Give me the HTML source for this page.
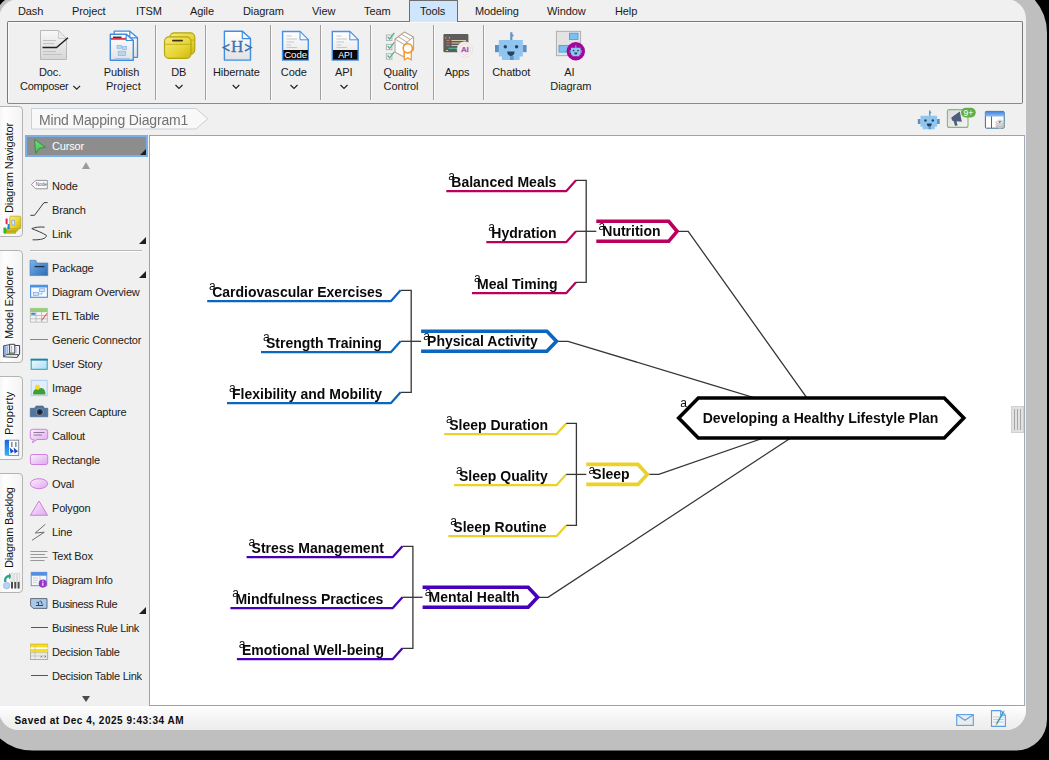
<!DOCTYPE html>
<html>
<head>
<meta charset="utf-8">
<title>Mind Mapping Diagram1</title>
<style>
*{box-sizing:border-box;margin:0;padding:0}
html,body{width:1049px;height:760px;overflow:hidden;background:#000}
body{position:relative;font-family:"Liberation Sans",sans-serif;font-size:11px;color:#111}
.abs{position:absolute}
#shadow{position:absolute;left:0;top:0}
#clip{position:absolute;left:-1px;top:-1px;width:1027px;height:731px;border-radius:20px;background:#f0f0f0;overflow:hidden}
#win{position:absolute;left:1px;top:1px;width:1026px;height:730px}
/* menu */
.mi{position:absolute;top:4px;height:14px;line-height:14px;font-size:11px;letter-spacing:-0.1px;color:#1a1a1a;white-space:nowrap}
#tooltab{position:absolute;left:409px;top:0;width:49px;height:22px;background:#cfe5fb;border:1px solid #6e6e6e;border-bottom:none;border-radius:1px 1px 0 0}
#ribbon{position:absolute;left:7px;top:21px;width:1016px;height:83px;border-radius:2px;border:1px solid #7a7a7a;border-bottom-color:#8a8a8a;background:#f0f0f0;box-shadow:inset 1px 1px 0 #fafafa}
.sep{position:absolute;top:25px;width:1px;height:75px;background:#a0a0a0;box-shadow:1px 0 0 #fbfbfb}
.rl{position:absolute;font-size:11px;line-height:14px;text-align:center;white-space:nowrap;color:#1a1a1a;letter-spacing:-0.1px;transform:translateX(-50%)}
.ric{position:absolute;top:28px;width:34px;height:34px}
/* side tabs */
.vtab{position:absolute;left:-2px;width:25px;border:1px solid #b4b4b4;border-radius:0 4px 4px 0;background:linear-gradient(90deg,#f4f4f4 0,#fefefe 25%,#f3f3f3 100%)}
.vtxt{position:absolute;left:9px;font-size:11px;white-space:nowrap;color:#111;transform-origin:0 0;transform:rotate(-90deg) translate(0,-50%);line-height:14px;letter-spacing:-0.1px}
/* palette */
.pi{position:absolute;left:52px;font-size:11px;line-height:14px;white-space:nowrap;color:#1a1a1a;letter-spacing:-0.18px}
.pic{position:absolute;left:30px;width:18px;height:18px}
.tri{position:absolute;left:139px;width:0;height:0;border-left:7px solid transparent;border-bottom:7px solid #1e1e1e}
#canvas{position:absolute;left:149px;top:135px;width:876px;height:571px;background:#fff;border:1px solid #9aa3b2;border-right-color:#a6adba}
#status{position:absolute;left:0;top:706px;width:1026px;height:24px;background:linear-gradient(#ffffff,#f2f2f2 60%,#ededed)}
</style>
</head>
<body>
<svg id="shadow" width="1049" height="760" viewBox="0 0 1049 760"><path d="M0 5.05A18 18 0 0 1 5.05 0H1034.8A50 50 0 0 1 1047 32.7V719.5A31 31 0 0 1 1016 750.6H32.7A50 50 0 0 1 0 738.5Z" fill="#bfbfbf"/></svg>
<div id="clip"><div id="win">

<!-- MENU BAR -->
<div id="tooltab"></div>
<div class="mi" style="left:18px">Dash</div>
<div class="mi" style="left:72px">Project</div>
<div class="mi" style="left:136px">ITSM</div>
<div class="mi" style="left:190px">Agile</div>
<div class="mi" style="left:243px">Diagram</div>
<div class="mi" style="left:312px">View</div>
<div class="mi" style="left:364px">Team</div>
<div class="mi" style="left:420px">Tools</div>
<div class="mi" style="left:475px">Modeling</div>
<div class="mi" style="left:547px">Window</div>
<div class="mi" style="left:615px">Help</div>

<!-- RIBBON -->
<div id="ribbon"></div>
<div class="abs" style="left:410px;top:21px;width:47px;height:1px;background:#d3e7fb"></div>
<div class="sep" style="left:155px"></div>
<div class="sep" style="left:205px"></div>
<div class="sep" style="left:270px"></div>
<div class="sep" style="left:320px"></div>
<div class="sep" style="left:370px"></div>
<div class="sep" style="left:433px"></div>
<div class="sep" style="left:483px"></div>
<!--RIBBON-ITEMS-->
<!-- Doc Composer -->
<svg class="abs" style="left:38px;top:28px" width="34" height="34" viewBox="38 28 34 34">
<defs><linearGradient id="gpg" x1="0" y1="0" x2="0" y2="1"><stop offset="0" stop-color="#f8f8f8"/><stop offset="1" stop-color="#d6d6d6"/></linearGradient></defs>
<path d="M40.5 30.5H58.5L66.5 38.5V59.5H40.5Z" fill="url(#gpg)" stroke="#b9b9b9"/>
<path d="M58.5 30.5V38.5H66.5Z" fill="#ececec" stroke="#c2c2c2" stroke-width=".8"/>
<path d="M43 40.5H56M43 43.5H54M43 51.5H56M43 54.5H62" stroke="#bdbdbd" stroke-width=".9"/>
<path d="M42.5 47.5H56.5L68 37.8" fill="none" stroke="#222" stroke-width="1.5"/>
</svg>
<div class="rl" style="left:50px;top:65px">Doc.</div>
<div class="rl" style="left:44.2px;top:79px;letter-spacing:-0.3px">Composer</div>
<svg class="abs" style="left:72px;top:84px" width="10" height="8" viewBox="0 0 10 8"><path d="M1.3 1.8L4.7 5.2L8.1 1.8" fill="none" stroke="#222" stroke-width="1.2"/></svg>
<!-- Publish Project -->
<svg class="abs" style="left:107px;top:28px" width="34" height="34" viewBox="107 28 34 34">
<defs><linearGradient id="gpb" x1="0" y1="0" x2="0" y2="1"><stop offset="0" stop-color="#ffffff"/><stop offset="1" stop-color="#e2e2e4"/></linearGradient></defs>
<path d="M114.2 31.2H129.8L137.5 37.8V57.3H114.2Z" fill="url(#gpb)" stroke="#3f8ee0" stroke-width="1.3" stroke-linejoin="round"/>
<path d="M129.8 31.2V37.8H137.5" fill="none" stroke="#3f8ee0" stroke-width="1.2"/>
<path d="M110.3 34.3H126.2L133.3 40.5V60.3H110.3Z" fill="url(#gpb)" stroke="#3f8ee0" stroke-width="1.4" stroke-linejoin="round"/>
<path d="M126.2 34.3V40.5H133.3Z" fill="#f4f8fd" stroke="#3f8ee0" stroke-width="1.2" stroke-linejoin="round"/>
<rect x="111" y="37.9" width="15" height="1.9" fill="#e0394a"/>
<rect x="113" y="36.6" width="8.5" height="1.3" fill="#222"/>
<rect x="117.1" y="45.3" width="4.2" height="3" fill="#bcd4f0" stroke="#8db4e4" stroke-width=".7"/>
<rect x="122.1" y="46.4" width="4.6" height="3" fill="#bcd4f0" stroke="#8db4e4" stroke-width=".7"/>
<rect x="118.2" y="51.2" width="7.5" height="4.4" fill="#bcd4f0" stroke="#8db4e4" stroke-width=".7"/>
<path d="M115 58.6H129.8" stroke="#a3c6ea" stroke-width="1.1"/>
</svg>
<div class="rl" style="left:121.5px;top:65px">Publish</div>
<div class="rl" style="left:123.4px;top:79px;letter-spacing:0.1px">Project</div>
<!-- DB -->
<svg class="abs" style="left:162px;top:28px" width="36" height="34" viewBox="162 28 36 34">
<defs><linearGradient id="gdb" x1="0" y1="0" x2="1" y2="1"><stop offset="0" stop-color="#f6ea7a"/><stop offset=".6" stop-color="#e6d535"/><stop offset="1" stop-color="#cdb90f"/></linearGradient></defs>
<rect x="169.8" y="32.8" width="25" height="21.5" rx="4.5" fill="url(#gdb)" stroke="#b3a414" stroke-width="1.15"/>
<path d="M170 40H195" stroke="#b9a815" stroke-width=".8"/>
<rect x="164.5" y="36.8" width="26.5" height="21.5" rx="4.5" fill="url(#gdb)" stroke="#b3a414" stroke-width="1.15"/>
<path d="M164.7 44.3H191" stroke="#b9a815" stroke-width=".8"/>
<rect x="172" y="39.7" width="11" height="1.7" rx=".8" fill="#3a3410"/>
</svg>
<div class="rl" style="left:178.7px;top:65px">DB</div>
<svg class="abs" style="left:174px;top:83px" width="10" height="8" viewBox="0 0 10 8"><path d="M1.5 2L5 5.4L8.5 2" fill="none" stroke="#222" stroke-width="1.2"/></svg>
<!-- Hibernate -->
<svg class="abs" style="left:221px;top:28px" width="34" height="34" viewBox="221 28 34 34">
<path d="M224.4 31.3H242.3L250.5 38.6V60.1H224.4Z" fill="url(#gpb)" stroke="#3f8ee0" stroke-width="1.4" stroke-linejoin="round"/>
<path d="M242.3 31.3V38.6H250.5Z" fill="#f4f8fd" stroke="#3f8ee0" stroke-width="1.2" stroke-linejoin="round"/>
<text x="237.2" y="52.4" text-anchor="middle" font-family="Liberation Serif,serif" font-size="17" fill="#3d72b5" stroke="#3d72b5" stroke-width=".35">H</text>
<path d="M229.6 44.3L223.3 47.6L229.6 51M245 44.3L251.2 47.6L245 51" fill="none" stroke="#3d72b5" stroke-width="1.5"/>
</svg>
<div class="rl" style="left:236.4px;top:65px">Hibernate</div>
<svg class="abs" style="left:231.3px;top:82.8px" width="10" height="8" viewBox="0 0 10 8"><path d="M1.7 2L5 5.3L8.3 2" fill="none" stroke="#222" stroke-width="1.2"/></svg>
<!-- Code -->
<svg class="abs" style="left:280px;top:28px" width="34" height="34" viewBox="280 28 34 34">
<path d="M282.6 31.5H300L308.3 39.8V60H282.6Z" fill="url(#gpb)" stroke="#4a90e2" stroke-width="1.4"/>
<path d="M300 31.5V39.8H308.3Z" fill="#f3f8fe" stroke="#4a90e2" stroke-width="1"/>
<path d="M286.5 36H291.5M286.5 39H297M286.5 42H294M286.5 45H291M286.5 47.5H297" stroke="#c4c4c4" stroke-width=".9"/>
<rect x="283.3" y="50" width="24.6" height="9.6" fill="#0a0a0a"/>
<text x="295.6" y="58" text-anchor="middle" font-family="Liberation Sans,sans-serif" font-size="9.6" fill="#fff">Code</text>
</svg>
<div class="rl" style="left:293.8px;top:65px">Code</div>
<svg class="abs" style="left:289.4px;top:83px" width="10" height="8" viewBox="0 0 10 8"><path d="M1.5 2L5 5.4L8.5 2" fill="none" stroke="#222" stroke-width="1.2"/></svg>
<!-- API -->
<svg class="abs" style="left:329px;top:28px" width="34" height="34" viewBox="329 28 34 34">
<path d="M332.3 31.5H349.8L358.2 39.8V60H332.3Z" fill="url(#gpb)" stroke="#4a90e2" stroke-width="1.4"/>
<path d="M349.8 31.5V39.8H358.2Z" fill="#f3f8fe" stroke="#4a90e2" stroke-width="1"/>
<path d="M336.5 36H341.5M336.5 39H347M336.5 42H344M336.5 45H341M336.5 47.5H347" stroke="#c4c4c4" stroke-width=".9"/>
<rect x="333" y="50" width="24.6" height="9.6" fill="#0a0a0a"/>
<text x="345.3" y="58" text-anchor="middle" font-family="Liberation Sans,sans-serif" font-size="8.8" fill="#fff">API</text>
</svg>
<div class="rl" style="left:343.8px;top:65px">API</div>
<svg class="abs" style="left:339.2px;top:83px" width="10" height="8" viewBox="0 0 10 8"><path d="M1.5 2L5 5.4L8.5 2" fill="none" stroke="#222" stroke-width="1.2"/></svg>
<!-- Quality Control -->
<svg class="abs" style="left:384px;top:28px" width="34" height="34" viewBox="384 28 34 34">
<g fill="#f4f4f4" stroke="#a9b0b0" stroke-width=".9"><rect x="386.3" y="35" width="5.6" height="5.4"/><rect x="386.3" y="44.3" width="5.6" height="5.4"/><rect x="386.3" y="53.8" width="5.6" height="5.4"/></g>
<g fill="none" stroke="#4fae8e" stroke-width="1.25"><path d="M387.6 36.8L389.6 39L394.3 33"/><path d="M387.6 46L389.6 48.3L394.3 42.3"/><path d="M387.6 55.5L389.6 57.8L394.3 51.8"/></g>
<path d="M395 39L404.5 32L413.5 37V50L404 57L395 52Z" fill="#fff" stroke="#b9a693" stroke-width="1.1" stroke-linejoin="round"/>
<path d="M395 39L404 44.5L413.5 37M404 44.5V57M398.2 36.6L407.3 42.4V47M401.4 34.3L410.4 39.5" fill="none" stroke="#b9a693" stroke-width="1"/>
<path d="M404.3 52V60L407.8 57.7L411.3 60V52Z" fill="#fff" stroke="#f5962a" stroke-width="1.2" stroke-linejoin="round"/>
<circle cx="407.8" cy="48.3" r="4.6" fill="#fff" stroke="#f5962a" stroke-width="1.6"/>
</svg>
<div class="rl" style="left:400.3px;top:65px">Quality</div>
<div class="rl" style="left:401px;top:79px">Control</div>
<!-- Apps -->
<svg class="abs" style="left:440px;top:28px" width="36" height="34" viewBox="440 28 36 34">
<rect x="443.4" y="34" width="25" height="18.2" rx="1" fill="#5d5d5d"/>
<path d="M446.5 36.8L445.3 37.8L446.5 38.8M448.8 36.8L450 37.8L448.8 38.8" fill="none" stroke="#d0d0d0" stroke-width=".6"/>
<path d="M446.3 40.5H449.5M446.3 43H449.5M446.3 45.5H449.5" stroke="#e06a55" stroke-width="1"/>
<path d="M451.5 40.5H466M451.5 43H464M451.5 45.5H460" stroke="#d8c8a8" stroke-width="1"/>
<path d="M448.5 48.3H458" stroke="#4fc3a1" stroke-width="1"/><path d="M446 50.5H448" stroke="#e8d27a" stroke-width=".9"/>
<circle cx="464.8" cy="49.4" r="7.6" fill="#fff" stroke="#d9d9d9" stroke-width=".8"/>
<circle cx="464.8" cy="49.4" r="5.9" fill="#fbeaec" stroke="#f0bcc2" stroke-width=".6"/>
<text x="464.8" y="52.2" text-anchor="middle" font-family="Liberation Sans,sans-serif" font-weight="bold" font-size="7.8" fill="#4560c4" stroke="#e2707c" stroke-width=".25">AI</text>
</svg>
<div class="rl" style="left:457.2px;top:65px">Apps</div>
<!-- Chatbot -->
<svg class="abs" style="left:493px;top:28px" width="36" height="34" viewBox="493 28 36 34">
<path d="M510.2 32.2H512.4V34.4H513.5V36.6H512.4V40H510.2Z" fill="#5f97cb"/>
<rect x="495" y="45" width="4" height="7.2" fill="#5f8fc0"/><rect x="522.6" y="45" width="4" height="7.2" fill="#5f8fc0"/>
<path d="M498.8 40H522.8V56.6H519.6V60H502V56.6H498.8Z" fill="#90c5ef"/>
<circle cx="505.3" cy="46.8" r="1.7" fill="#27425e"/><circle cx="516.6" cy="46.8" r="1.7" fill="#27425e"/>
<path d="M507.2 51.6H514.6C514.6 54.6 512.9 56 510.9 56C508.9 56 507.2 54.6 507.2 51.6Z" fill="#27425e"/>
<rect x="510" y="56" width="3.6" height="4" fill="#5f97cb"/>
</svg>
<div class="rl" style="left:511.2px;top:65px">Chatbot</div>
<!-- AI Diagram -->
<svg class="abs" style="left:553px;top:28px" width="36" height="36" viewBox="553 28 36 36">
<rect x="556.4" y="31.3" width="24.2" height="24.4" fill="#e3e3e3" stroke="#a8a8a8" stroke-width=".9"/>
<rect x="569.4" y="33.2" width="8.6" height="6.2" fill="#7cc0f2" stroke="#3f9ae0" stroke-width=".8"/>
<rect x="559" y="45.5" width="10" height="6.6" fill="#7cc0f2" stroke="#3f9ae0" stroke-width=".8"/>
<circle cx="575.8" cy="51.2" r="9.2" fill="#a3069c"/>
<rect x="575.2" y="45.3" width="1.2" height="2.6" fill="#6fa8de"/>
<rect x="569.6" y="50" width="1.6" height="3" fill="#5f8fc0"/><rect x="580.4" y="50" width="1.6" height="3" fill="#5f8fc0"/>
<path d="M571 47.8H580.6V54.8H579.3V56.3H572.3V54.8H571Z" fill="#90c5ef"/>
<circle cx="573.6" cy="50.6" r=".8" fill="#27425e"/><circle cx="578" cy="50.6" r=".8" fill="#27425e"/>
<path d="M574.3 52.6H577.3C577.3 54 576.6 54.6 575.8 54.6C575 54.6 574.3 54 574.3 52.6Z" fill="#27425e"/>
</svg>
<div class="rl" style="left:569.3px;top:65px">AI</div>
<div class="rl" style="left:570.8px;top:79px">Diagram</div>
<!--/RIBBON-ITEMS-->

<!--BREADCRUMB-->
<svg class="abs" style="left:28px;top:105px" width="190" height="28" viewBox="28 105 190 28"><path d="M31.5 108.5H196L207.8 118.8L196 129H31.5Z" fill="#f8f8f8" stroke="#c9d0d9" stroke-width="1"/></svg>
<div class="abs" style="left:38.8px;top:111px;font-size:14px;line-height:18px;letter-spacing:-0.16px;color:#727272;white-space:nowrap;will-change:transform">Mind Mapping Diagram1</div>
<!-- robot small -->
<svg class="abs" style="left:916px;top:108px" width="26" height="24" viewBox="916 108 26 24">
<path d="M929 110.4H930.4V111.8H931.2V113.2H930.4V116H929Z" fill="#5f97cb"/>
<rect x="917.8" y="119" width="2.8" height="5" fill="#5f8fc0"/><rect x="936.9" y="119" width="2.8" height="5" fill="#5f8fc0"/>
<path d="M920.5 115.8H937V126.8H934.8V129.2H922.7V126.8H920.5Z" fill="#90c5ef"/>
<circle cx="925.5" cy="120.5" r="1.2" fill="#27425e"/><circle cx="932.8" cy="120.5" r="1.2" fill="#27425e"/>
<path d="M926.8 123.6H931.8C931.8 125.8 930.6 126.7 929.3 126.7C928 126.7 926.8 125.8 926.8 123.6Z" fill="#27425e"/>
<rect x="928.6" y="126.7" width="2.4" height="2.5" fill="#5f97cb"/>
</svg>
<!-- megaphone -->
<svg class="abs" style="left:945px;top:106px" width="34" height="26" viewBox="945 106 34 26">
<defs><linearGradient id="gmg" x1="0" y1="0" x2="1" y2="1"><stop offset="0" stop-color="#dcdcdc"/><stop offset="1" stop-color="#f4f4f4"/></linearGradient></defs>
<rect x="947.4" y="109.6" width="20.6" height="17.8" rx="2" fill="url(#gmg)" stroke="#86b777" stroke-width="1.1"/>
<path d="M951.3 117.6L959.8 111.6L961.8 121.8L956.5 121.2L957.6 125.6L955 125.8L953.6 120.9L952 120.6Z" fill="#4d5d7c"/>
<rect x="961" y="107.8" width="14.8" height="9.6" rx="4.8" fill="#62b044"/>
<text x="968.4" y="115.6" text-anchor="middle" font-family="Liberation Sans,sans-serif" font-size="8.6" fill="#fff">9+</text>
</svg>
<!-- panel icon -->
<svg class="abs" style="left:983px;top:109px" width="24" height="24" viewBox="983 109 24 24">
<defs><linearGradient id="gpn" x1="0" y1="0" x2="0" y2="1"><stop offset="0" stop-color="#3f7fe0"/><stop offset="1" stop-color="#8fbdf5"/></linearGradient></defs>
<rect x="985.4" y="111.4" width="18.8" height="16.8" rx="1" fill="#fdfdfd" stroke="#34708f" stroke-width="1"/>
<rect x="985.4" y="111.2" width="18.8" height="5.2" rx="1" fill="url(#gpn)"/>
<path d="M991.5 116.4V128" stroke="#34708f" stroke-width="1"/>
<path d="M995.5 126.6L1000 124.2L1004.5 126.6L1000 129Z" fill="#c9c9c9" stroke="#a8a8a8" stroke-width=".5"/>
<path d="M995.5 124.4L1000 122L1004.5 124.4L1000 126.8Z" fill="#dcdcdc" stroke="#a8a8a8" stroke-width=".5"/>
<path d="M995.5 122.2L1000 119.8L1004.5 122.2L1000 124.6Z" fill="#e8e8e8" stroke="#a8a8a8" stroke-width=".5"/>
<path d="M998.6 121L1001.5 121.2L999.4 123.4Z" fill="#3f7fe0"/>
</svg>
<!--/BREADCRUMB-->

<!--SIDETABS-->
<div class="vtab" style="top:106px;height:131px"></div>
<div class="vtxt" style="top:213px">Diagram Navigator</div>
<svg class="abs" style="left:2px;top:214px" width="21" height="21" viewBox="2 214 21 21">
<defs><linearGradient id="gye" x1="0" y1="0" x2="1" y2="1"><stop offset="0" stop-color="#f8ee80"/><stop offset=".5" stop-color="#ecd93a"/><stop offset="1" stop-color="#c9b312"/></linearGradient></defs>
<path d="M6 229.5H17L15.5 233.3H4Z" fill="#cdb81a" stroke="#8f8010" stroke-width=".5"/>
<path d="M7.5 227.5H19L17.3 231H6Z" fill="#d8c420" stroke="#8f8010" stroke-width=".5"/>
<rect x="5.6" y="218.6" width="2" height="5.6" rx=".6" fill="#e0245a"/>
<rect x="7.6" y="224" width="2.2" height="5.2" rx=".6" fill="#1f7fe0"/>
<rect x="3.4" y="227.4" width="2.8" height="5.8" rx=".6" fill="#22c02a"/>
<rect x="9.8" y="216.2" width="11" height="12.6" rx="1" fill="url(#gye)" stroke="#b5a215" stroke-width=".7"/>
<rect x="11.9" y="220.2" width="2.6" height="4.8" fill="#e6eefa" stroke="#7f9fd8" stroke-width=".7"/>
</svg>
<div class="vtab" style="top:250px;height:113px"></div>
<div class="vtxt" style="top:339px">Model Explorer</div>
<svg class="abs" style="left:2px;top:342px" width="20" height="18" viewBox="2 342 20 18">
<defs><linearGradient id="gme" x1="0" y1="0" x2="1" y2="0"><stop offset="0" stop-color="#7fa8e6"/><stop offset="1" stop-color="#f2f5fa"/></linearGradient></defs>
<path d="M14 345.5H19.6V354L17 357.5" fill="#f2f2f2" stroke="#3f444a" stroke-width="1"/>
<path d="M9.5 344.3H14.8V353.2H9.5Z" fill="#eef2f8" stroke="#3f444a" stroke-width="1"/>
<path d="M3.6 345.8L9.6 344.6V353.5L3.6 356.8Z" fill="url(#gme)" stroke="#3f444a" stroke-width=".9"/>
<path d="M3.6 356.8L6 354.6H18.5L17 357.5Z" fill="#f4f4f4" stroke="#3f444a" stroke-width=".9"/>
<path d="M5.5 347V355M7.5 346.5V354M11.5 346V352.5M16 347V353" stroke="#8fb0e0" stroke-width=".9"/>
<rect x="10.5" y="352.6" width="3" height="1.2" fill="#8a9a2a"/>
</svg>
<div class="vtab" style="top:376px;height:84px"></div>
<div class="vtxt" style="top:434.5px;letter-spacing:.25px">Property</div>
<svg class="abs" style="left:2px;top:437px" width="20" height="22" viewBox="2 437 20 22">
<defs><linearGradient id="gpr" x1="0" y1="0" x2="0" y2="1"><stop offset="0" stop-color="#1f62d8"/><stop offset="1" stop-color="#35b4fa"/></linearGradient></defs>
<rect x="8.5" y="440.2" width="10.2" height="15.2" fill="#fcfcfc" stroke="#76809a" stroke-width=".9"/>
<rect x="4.7" y="439.8" width="4.3" height="16" rx="1.2" fill="url(#gpr)"/>
<rect x="11" y="442" width="1.6" height="5" fill="#8a90a0"/><rect x="15" y="442" width="1.6" height="5" fill="#8a90a0"/>
<path d="M9.6 447.6L14 451.2L10.6 453.4ZM13.6 447.6L18 451.2L14.6 453.4Z" fill="#1848c8"/>
</svg>
<div class="vtab" style="top:473px;height:120px"></div>
<div class="vtxt" style="top:567.5px;letter-spacing:-.2px">Diagram Backlog</div>
<svg class="abs" style="left:2px;top:571px" width="20" height="20" viewBox="2 571 20 20">
<path d="M4 582C3.5 577 6.5 574.8 9 575V573L12 576.3L9 579.6V577.6C7.3 577.4 6 578.6 6.3 582Z" fill="#2aa58a"/>
<circle cx="6.6" cy="585.6" r="3.2" fill="#b9d3f5" stroke="#8fb6ec" stroke-width=".8"/>
<path d="M11 573.2H13V582H11ZM14.3 573.2H16.3V582H14.3ZM17.6 573.2H19.6V582H17.6Z" fill="#f6f6f6" stroke="#c4c4c4" stroke-width=".6"/>
<path d="M11 582H13V588.5H11ZM14.3 582H16.3V588.5H14.3ZM17.6 582H19.6V588.5H17.6Z" fill="#4a4a4a"/>
</svg>
<!--/SIDETABS-->

<!--PALETTE-->
<div class="abs" style="left:25px;top:135px;width:123px;height:22px;background:#8d8d8d;border:2px solid #7ab0ea"></div>
<svg class="abs" style="left:32px;top:138px" width="16" height="16" viewBox="32 138 16 16"><defs><linearGradient id="gar" x1="0" y1="0" x2="0" y2="1"><stop offset="0" stop-color="#86d086"/><stop offset="1" stop-color="#2fd244"/></linearGradient></defs><path d="M34.6 139.4L45.4 147.2L39.2 148.4L35.6 153.4Z" fill="url(#gar)" stroke="#2f8a3a" stroke-width=".9" stroke-linejoin="round"/></svg>
<div class="pi" style="top:139px;color:#fff">Cursor</div>
<div class="tri" style="top:149px;left:139.5px;border-left-width:6px;border-bottom-width:6px;border-bottom-color:#1c1c1c"></div>
<div class="abs" style="left:82px;top:162px;width:0;height:0;border-left:4.2px solid transparent;border-right:4.2px solid transparent;border-bottom:7px solid #9b9b9b"></div>
<!-- Node -->
<svg class="abs" style="left:29px;top:176px" width="20" height="18" viewBox="29 176 20 18"><path d="M31.3 184.5L35.8 180.4H47.3V188.8H35.8Z" fill="#fafafa" stroke="#8a8a8a" stroke-width=".9"/><text x="41.3" y="186.3" text-anchor="middle" font-size="4.6" font-family="Liberation Sans,sans-serif" fill="#555">Node</text></svg>
<div class="pi" style="top:179px">Node</div>
<svg class="abs" style="left:29px;top:200px" width="20" height="18" viewBox="29 200 20 18"><path d="M30.3 215.3H34.5L44 202.6H47.6" fill="none" stroke="#3c3c3c" stroke-width="1"/></svg>
<div class="pi" style="top:203px">Branch</div>
<svg class="abs" style="left:29px;top:224px" width="20" height="20" viewBox="29 224 20 20"><path d="M44.6 227.2C40 226.6 35 227.2 31.8 228.6C37 230.8 43 233 46.3 235.3C47 238.6 40 240.2 32.6 239.8" fill="none" stroke="#3c3c3c" stroke-width="1"/></svg>
<div class="pi" style="top:227px">Link</div>
<div class="tri" style="top:237px"></div>
<div class="abs" style="left:30px;top:250px;width:112px;height:1px;background:#b8b8b8;box-shadow:0 1px 0 #fcfcfc"></div>
<!-- Package -->
<svg class="abs" style="left:28px;top:258px" width="22" height="20" viewBox="28 258 22 20"><defs><linearGradient id="gfo" x1="0" y1="0" x2="1" y2="1"><stop offset="0" stop-color="#7db4ea"/><stop offset="1" stop-color="#2c6ab3"/></linearGradient></defs><path d="M30 260.3H35.8L37 263H47.8V275.6H30Z" fill="url(#gfo)" stroke="#3a78c2" stroke-width=".6"/><path d="M34.6 266.6H44.4" stroke="#1c2f48" stroke-width="1.3"/></svg>
<div class="pi" style="top:261px">Package</div>
<div class="tri" style="top:271px"></div>
<!-- Diagram Overview -->
<svg class="abs" style="left:28px;top:282px" width="22" height="20" viewBox="28 282 22 20"><rect x="30.6" y="285.3" width="16.8" height="12" fill="#f6fafe" stroke="#4a90e2" stroke-width="1.1"/><rect x="30.6" y="285.3" width="16.8" height="2.2" fill="#4a90e2"/><rect x="33.5" y="292.5" width="5" height="2.8" fill="#d6e6f8" stroke="#6ea5e2" stroke-width=".7"/><rect x="39.5" y="288.8" width="5.2" height="2.8" fill="#d6e6f8" stroke="#6ea5e2" stroke-width=".7"/><path d="M38.5 294H42V291.6" fill="none" stroke="#6ea5e2" stroke-width=".7"/></svg>
<div class="pi" style="top:285px">Diagram Overview</div>
<!-- ETL Table -->
<svg class="abs" style="left:28px;top:306px" width="22" height="20" viewBox="28 306 22 20"><rect x="30.3" y="308.3" width="17" height="13.8" fill="#f4f4f4" stroke="#b5b5b5" stroke-width=".8"/><rect x="30.3" y="308.3" width="17" height="3.8" fill="#93cf75"/><path d="M30.3 315.5H47.3M30.3 318.8H47.3M36 312V322M41.6 312V322" stroke="#b5b5b5" stroke-width=".8"/><rect x="31" y="312.8" width="4.5" height="2" rx="1" fill="#3f7fd0"/><path d="M41.5 320.5L47 313.5" stroke="#e05a5a" stroke-width="1.2"/></svg>
<div class="pi" style="top:309px">ETL Table</div>
<div class="abs" style="left:30px;top:338.6px;width:17.5px;height:1.7px;background:#868686"></div>
<div class="pi" style="top:333px">Generic Connector</div>
<!-- User Story -->
<svg class="abs" style="left:28px;top:354px" width="22" height="20" viewBox="28 354 22 20"><defs><linearGradient id="gus" x1="0" y1="0" x2="1" y2="1"><stop offset="0" stop-color="#f2fbff"/><stop offset="1" stop-color="#a9dcf5"/></linearGradient></defs><rect x="31.2" y="359.3" width="16" height="10" fill="url(#gus)" stroke="#2b9ec4" stroke-width="1"/><rect x="30.7" y="358.8" width="17" height="1.8" fill="#1f7f9f"/></svg>
<div class="pi" style="top:357px">User Story</div>
<!-- Image -->
<svg class="abs" style="left:28px;top:378px" width="22" height="20" viewBox="28 378 22 20"><rect x="31.2" y="380.3" width="16" height="15.4" fill="#e2eefb" stroke="#a9c9ee" stroke-width=".9"/><circle cx="37.5" cy="387" r="2.6" fill="#f3dc2a"/><path d="M33 394.5C33 389 36 388.5 38.5 390C40 386.5 45.5 387.5 45.5 394.5Z" fill="#3f9e3a"/></svg>
<div class="pi" style="top:381px">Image</div>
<!-- Screen Capture -->
<svg class="abs" style="left:28px;top:402px" width="22" height="20" viewBox="28 402 22 20"><path d="M30.3 408.3H34.5L36 406H43L44.5 408.3H47.8V416.8H30.3Z" fill="#52779f" stroke="#3d5f86" stroke-width=".6"/><circle cx="39.8" cy="412" r="3.6" fill="#2e3a48" stroke="#7d98b8" stroke-width=".9"/><circle cx="39.8" cy="412" r="1.5" fill="#151a22"/></svg>
<div class="pi" style="top:405px">Screen Capture</div>
<!-- Callout -->
<svg class="abs" style="left:28px;top:426px" width="22" height="20" viewBox="28 426 22 20"><defs><linearGradient id="gpu" x1="0" y1="0" x2="1" y2="1"><stop offset="0" stop-color="#fbf0fd"/><stop offset="1" stop-color="#dfa8ee"/></linearGradient></defs><path d="M32.5 429.3H45.5Q47.7 429.3 47.7 431.5V437.3Q47.7 439.5 45.5 439.5H37L32.3 442.8L33.8 439.5H32.5Q30.3 439.5 30.3 437.3V431.5Q30.3 429.3 32.5 429.3Z" fill="url(#gpu)" stroke="#d07fe0" stroke-width="1"/><path d="M33.5 432.5H44.5M33.5 435H42" stroke="#7a5a86" stroke-width=".8"/></svg>
<div class="pi" style="top:429px">Callout</div>
<!-- Rectangle -->
<svg class="abs" style="left:28px;top:450px" width="22" height="20" viewBox="28 450 22 20"><rect x="30.4" y="454.5" width="17.3" height="10" rx="1.8" fill="url(#gpu)" stroke="#d07fe0" stroke-width="1"/></svg>
<div class="pi" style="top:453px">Rectangle</div>
<!-- Oval -->
<svg class="abs" style="left:28px;top:474px" width="22" height="20" viewBox="28 474 22 20"><ellipse cx="39" cy="483.7" rx="8.7" ry="5" fill="url(#gpu)" stroke="#d07fe0" stroke-width="1"/></svg>
<div class="pi" style="top:477px">Oval</div>
<!-- Polygon -->
<svg class="abs" style="left:28px;top:498px" width="22" height="20" viewBox="28 498 22 20"><path d="M39 501L47.6 515.3H30.4Z" fill="url(#gpu)" stroke="#d07fe0" stroke-width="1" stroke-linejoin="round"/></svg>
<div class="pi" style="top:501px">Polygon</div>
<!-- Line -->
<svg class="abs" style="left:28px;top:522px" width="22" height="20" viewBox="28 522 22 20"><path d="M45.3 524.3L35.2 533L44.3 532.2L32 540.3" fill="none" stroke="#6e6e6e" stroke-width="1"/></svg>
<div class="pi" style="top:525px">Line</div>
<!-- Text Box -->
<svg class="abs" style="left:28px;top:546px" width="22" height="20" viewBox="28 546 22 20"><path d="M30.3 551.5H47.5M30.3 554.5H45M30.3 557.5H47.5M30.3 560.5H44.5" stroke="#8c8c8c" stroke-width=".9"/></svg>
<div class="pi" style="top:549px">Text Box</div>
<!-- Diagram Info -->
<svg class="abs" style="left:28px;top:570px" width="22" height="20" viewBox="28 570 22 20"><rect x="31.2" y="572.3" width="15.6" height="13.4" fill="#f4f7fb" stroke="#5d8fd0" stroke-width=".9"/><rect x="31.2" y="572.3" width="15.6" height="3.4" fill="#4f8ee0"/><path d="M33 578H38M33 580.3H38M33 582.6H37M40 576V585" stroke="#c5c9d0" stroke-width=".8"/><circle cx="42.8" cy="583.6" r="4.1" fill="#9a35c8"/><rect x="42.3" y="582.6" width="1.1" height="3.2" fill="#fff"/><rect x="42.3" y="580.7" width="1.1" height="1.1" fill="#fff"/></svg>
<div class="pi" style="top:573px">Diagram Info</div>
<!-- Business Rule -->
<svg class="abs" style="left:28px;top:594px" width="22" height="20" viewBox="28 594 22 20"><path d="M30.6 598.6H47V608.4H33.2L30.6 605.8Z" fill="#a9c9ea" stroke="#55606e" stroke-width=".9"/><path d="M36.5 602.3H38.5V605.5H36M38.5 605.5H43M39.5 601.3C41 600.8 42 601.8 41.6 603.2L43 604.6" fill="none" stroke="#2c333d" stroke-width=".9"/></svg>
<div class="pi" style="top:597px;letter-spacing:-0.4px">Business Rule</div>
<div class="tri" style="top:607px"></div>
<div class="abs" style="left:30.5px;top:626.7px;width:17px;height:1.6px;background:#555"></div>
<div class="pi" style="top:621px;letter-spacing:-0.37px">Business Rule Link</div>
<!-- Decision Table -->
<svg class="abs" style="left:28px;top:642px" width="22" height="20" viewBox="28 642 22 20"><rect x="30.4" y="644.2" width="17.3" height="15.2" fill="#ededed" stroke="#9c9c9c" stroke-width=".8"/><rect x="30.4" y="644.2" width="17.3" height="3.3" fill="#f7de1c"/><rect x="30.4" y="647.5" width="17.3" height="1.5" fill="#fdfdf2"/><rect x="30.4" y="649" width="17.3" height="3.5" fill="#f7de1c"/><path d="M30.4 644.4H47.7" stroke="#e8c21a" stroke-width=".8"/><path d="M30.4 652.8H47.7M30.4 656H47.7M35 644.5V659" stroke="#b9b9b9" stroke-width=".7"/><path d="M40.6 655.8L42.2 657.4M42.2 655.8L40.6 657.4M44.4 655.8L46 657.4M46 655.8L44.4 657.4" stroke="#6a6a6a" stroke-width=".7"/></svg>
<div class="pi" style="top:645px;letter-spacing:-0.27px">Decision Table</div>
<div class="abs" style="left:30.5px;top:674.9px;width:17px;height:1.6px;background:#555"></div>
<div class="pi" style="top:669px;letter-spacing:-0.25px">Decision Table Link</div>
<div class="abs" style="left:81.5px;top:696px;width:0;height:0;border-left:4.2px solid transparent;border-right:4.2px solid transparent;border-top:6.6px solid #4a4a4a"></div>
<!--/PALETTE-->

<div id="canvas"></div>
<!--DIAGRAM-->
<svg class="abs" style="left:0;top:0;will-change:transform" width="1026" height="730" viewBox="0 0 1026 730" font-family="Liberation Sans, sans-serif">
<g stroke="#363636" stroke-width="1.3" fill="none">
<path d="M677.5 231.3H688.2L821.2 418.0"/>
<path d="M576.0 180.3H586.2V282.3H576.0"/>
<path d="M576.0 231.3H596.3"/>
<path d="M556.9 341.3H568.0L821.2 418.0"/>
<path d="M400.6 290.3H411.2V392.3H400.6"/>
<path d="M400.6 341.3H421.1"/>
<path d="M647.7 474.4H658.8L821.2 418.0"/>
<path d="M566.1 423.4H576.4V525.4H566.1"/>
<path d="M566.1 474.4H586.3"/>
<path d="M538.0 597.3H548.0L821.2 418.0"/>
<path d="M402.40000000000003 546.3H412.9V648.3H402.40000000000003"/>
<path d="M402.40000000000003 597.3H422.6"/>
</g>
<path d="M678.7 418L698.3 398H944.3L963.8 418L944.3 438H698.3Z" fill="#fff" stroke="#000" stroke-width="3.6" stroke-linejoin="miter"/>
<path d="M446.3 191.1H566.4L576.0 180.3" fill="none" stroke="#ba005c" stroke-width="2.2" stroke-linejoin="round"/>
<path d="M486.3 242.1H566.4L576.0 231.3" fill="none" stroke="#ba005c" stroke-width="2.2" stroke-linejoin="round"/>
<path d="M472.0 293.1H566.4L576.0 282.3" fill="none" stroke="#ba005c" stroke-width="2.2" stroke-linejoin="round"/>
<path d="M596.3 221.3H668.7L677.1 231.3L668.7 241.3H596.3" fill="none" stroke="#ba005c" stroke-width="3.6" stroke-linejoin="miter"/>
<path d="M207.2 301.1H391.0L400.6 290.3" fill="none" stroke="#0b66c0" stroke-width="2.2" stroke-linejoin="round"/>
<path d="M261.0 352.1H391.0L400.6 341.3" fill="none" stroke="#0b66c0" stroke-width="2.2" stroke-linejoin="round"/>
<path d="M227.0 403.1H391.0L400.6 392.3" fill="none" stroke="#0b66c0" stroke-width="2.2" stroke-linejoin="round"/>
<path d="M421.1 331.3H546.9000000000001L556.5 341.3L546.9000000000001 351.3H421.1" fill="none" stroke="#0b66c0" stroke-width="3.6" stroke-linejoin="miter"/>
<path d="M444.2 434.2H556.5L566.1 423.4" fill="none" stroke="#ebd128" stroke-width="2.2" stroke-linejoin="round"/>
<path d="M454.0 485.2H556.5L566.1 474.4" fill="none" stroke="#ebd128" stroke-width="2.2" stroke-linejoin="round"/>
<path d="M448.3 536.2H556.5L566.1 525.4" fill="none" stroke="#ebd128" stroke-width="2.2" stroke-linejoin="round"/>
<path d="M586.3 464.4H638.0L647.3000000000001 474.4L638.0 484.4H586.3" fill="none" stroke="#ebd128" stroke-width="3.6" stroke-linejoin="miter"/>
<path d="M246.6 557.1H392.8L402.40000000000003 546.3" fill="none" stroke="#4600b9" stroke-width="2.2" stroke-linejoin="round"/>
<path d="M230.4 608.1H392.8L402.40000000000003 597.3" fill="none" stroke="#4600b9" stroke-width="2.2" stroke-linejoin="round"/>
<path d="M236.9 659.1H392.8L402.40000000000003 648.3" fill="none" stroke="#4600b9" stroke-width="2.2" stroke-linejoin="round"/>
<path d="M422.6 587.3H528.2L537.6 597.3L528.2 607.3H422.6" fill="none" stroke="#4600b9" stroke-width="3.6" stroke-linejoin="miter"/>
<g font-weight="bold" font-size="14" fill="#0a0a0a">
<text x="451.3" y="186.5">Balanced Meals</text>
<text x="491.3" y="237.5">Hydration</text>
<text x="477.0" y="288.5">Meal Timing</text>
<text x="602.3" y="235.5">Nutrition</text>
<text x="212.2" y="296.5">Cardiovascular Exercises</text>
<text x="266.0" y="347.5">Strength Training</text>
<text x="232.0" y="398.5">Flexibility and Mobility</text>
<text x="427.1" y="345.5">Physical Activity</text>
<text x="449.2" y="429.6">Sleep Duration</text>
<text x="459.0" y="480.6">Sleep Quality</text>
<text x="453.3" y="531.6">Sleep Routine</text>
<text x="592.3" y="478.6">Sleep</text>
<text x="251.6" y="552.5">Stress Management</text>
<text x="235.4" y="603.5">Mindfulness Practices</text>
<text x="241.9" y="654.5">Emotional Well-being</text>
<text x="428.6" y="601.5">Mental Health</text>
<text x="702.7" y="422.9">Developing a Healthy Lifestyle Plan</text>
</g>
<g font-size="12" fill="#0a0a0a">
<text x="448.2" y="179.5">a</text>
<text x="488.2" y="230.5">a</text>
<text x="473.9" y="281.5">a</text>
<text x="598.5" y="230.4">a</text>
<text x="209.1" y="289.5">a</text>
<text x="262.9" y="340.5">a</text>
<text x="228.9" y="391.5">a</text>
<text x="423.3" y="340.4">a</text>
<text x="446.1" y="422.6">a</text>
<text x="455.9" y="473.6">a</text>
<text x="450.2" y="524.6">a</text>
<text x="588.5" y="473.5">a</text>
<text x="248.5" y="545.5">a</text>
<text x="232.3" y="596.5">a</text>
<text x="238.8" y="647.5">a</text>
<text x="424.8" y="596.4">a</text>
<text x="680.2" y="407.4">a</text>
</g>
</svg>
<!--/DIAGRAM-->

<div id="status"></div>
<!--STATUS-->
<div class="abs" style="left:14.4px;top:714px;font-size:10px;font-weight:bold;line-height:14px;color:#0c0c0c;white-space:nowrap;letter-spacing:0.52px">Saved at Dec 4, 2025 9:43:34 AM</div>
<svg class="abs" style="left:954px;top:708px" width="56" height="22" viewBox="954 708 56 22">
<rect x="956.7" y="714.6" width="16.6" height="10.8" fill="#ececec" stroke="#5c9de8" stroke-width="1.1"/>
<path d="M956.7 714.8L965 720.3L973.3 714.8" fill="none" stroke="#5c9de8" stroke-width="1.1"/>
<path d="M991.5 710.6H1000.6L1005.4 715.2V726.4H991.5Z" fill="#f4f5f7" stroke="#5c9de8" stroke-width="1.1"/>
<path d="M1000.6 710.6V715.2H1005.4" fill="none" stroke="#5c9de8" stroke-width="1"/>
<path d="M993.3 717H1003.5M993.3 719.5H1003.5M993.3 722H1003.5" stroke="#c9c9c9" stroke-width="1"/>
<path d="M1003.6 711.6L996.6 724" stroke="#2a9fb8" stroke-width="1.5"/>
<path d="M996.6 724L996 725.4" stroke="#d8b040" stroke-width="1.2"/>
<path d="M1003.3 712.2L1004.2 710.6" stroke="#e8a0a0" stroke-width="1.3"/>
</svg>
<!-- right grip -->
<div class="abs" style="left:1011px;top:406px;width:13px;height:27px;background:#e1e1e1;border:1px solid #d0d0d0"></div>
<div class="abs" style="left:1014px;top:409px;width:1px;height:21px;background:#a6a6a6"></div>
<div class="abs" style="left:1017px;top:409px;width:1px;height:21px;background:#a6a6a6"></div>
<div class="abs" style="left:1019.5px;top:409px;width:1px;height:21px;background:#a6a6a6"></div>
<!--/STATUS-->

</div></div>
</body>
</html>
